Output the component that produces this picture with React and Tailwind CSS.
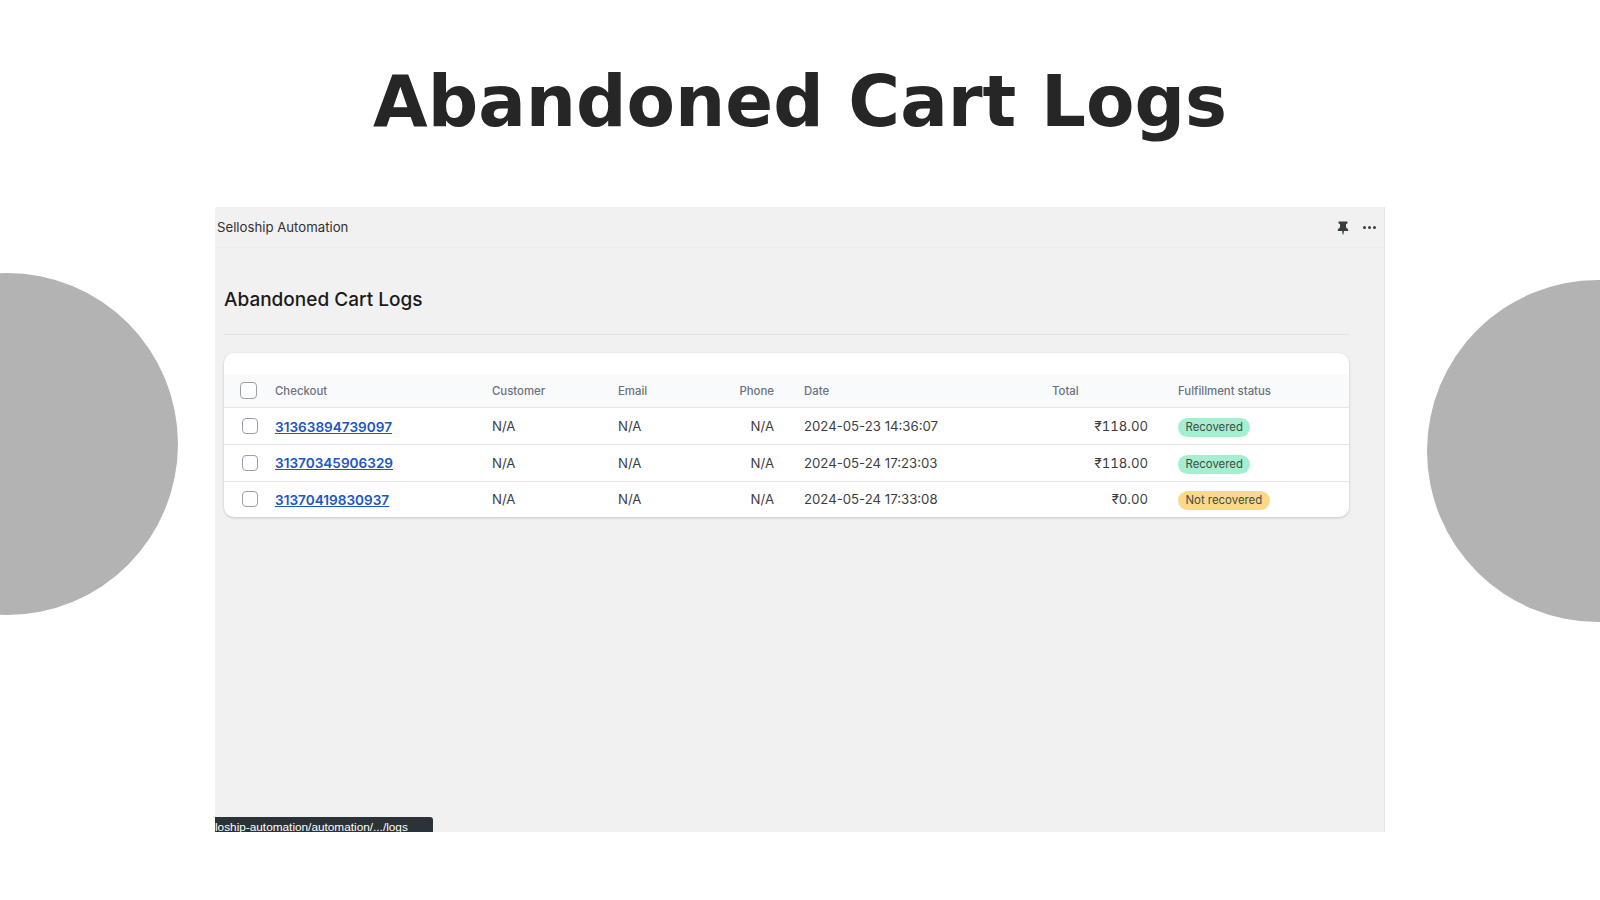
import React from 'react';

const rows = [
  { id: '31363894739097', date: '2024-05-23 14:36:07', total: '₹118.00', status: 'Recovered' },
  { id: '31370345906329', date: '2024-05-24 17:23:03', total: '₹118.00', status: 'Recovered' },
  { id: '31370419830937', date: '2024-05-24 17:33:08', total: '₹0.00', status: 'Not recovered' },
];

const gridCols = 'grid grid-cols-[51px_217px_126px_100px_56px_279px_95px_1fr] items-center';

const Checkbox = ({ className }) => (
  <span className={`block rounded-[4px] border-[1.5px] border-[#9aa0a8] bg-white ${className}`} />
);

const PinIcon = () => (
  <svg width="12" height="14" viewBox="0 0 12 14" fill="#3a3d40">
    <path d="M1.5 0.5h9v1.8L9 3.2v3L11.2 8.6v1.4H6.9L6.4 13.5h-.8L5.1 10H.8V8.6L3 6.2v-3L1.5 2.3z" />
  </svg>
);

const App = () => {
  return (
    <div className="relative w-[1600px] h-[900px] overflow-hidden bg-white font-['Inter',sans-serif]">
      {/* decorative circles */}
      <div className="absolute left-[-164px] top-[273px] w-[342px] h-[342px] rounded-full bg-[#b3b3b3]" />
      <div className="absolute left-[1427px] top-[280px] w-[342px] h-[342px] rounded-full bg-[#b3b3b3]" />

      <h1 className="h-[207px] pt-[54px] text-center text-[70.6px] leading-[96px] font-bold text-[#262626] font-['DejaVu_Sans',sans-serif]">
        Abandoned Cart Logs
      </h1>

      <div className="relative ml-[215px] w-[1170px] h-[625px] bg-[#f1f1f1] border-r border-[#e6e6e6] overflow-hidden">
        <div className="flex items-center justify-between h-[41px] pl-[2px] pr-[7px] pt-[1px] border-b border-[#ececec] bg-[#f1f1f1]">
          <span className="text-[13.2px] text-[#303030]">Selloship Automation</span>
          <div className="flex items-center gap-[14px]">
            <PinIcon />
            <span className="flex gap-[2px] w-[14px]">
              <i className="block w-[3px] h-[3px] rounded-full bg-[#3a3d40]" />
              <i className="block w-[3px] h-[3px] rounded-full bg-[#3a3d40]" />
              <i className="block w-[3px] h-[3px] rounded-full bg-[#3a3d40]" />
            </span>
          </div>
        </div>

        <div className="pl-[9px] w-[1134px]">
          <h2 className="pt-[38px] h-[87px] text-[19px] leading-[28px] font-medium text-[#1a1a1a] border-b border-[#e2e2e2]">
            Abandoned Cart Logs
          </h2>

          <div className="mt-[18px] pt-[21px] bg-white rounded-[10px] shadow-[0_1px_3px_rgba(0,0,0,0.18)] overflow-hidden">
            <div className={`${gridCols} h-[34px] bg-[#f9fafb] border-b border-[#e4e6ea] text-[11.4px] font-medium text-[#6b7280]`}>
              <div className="pl-4"><Checkbox className="w-[17px] h-[17px]" /></div>
              <div className="pt-[2px]">Checkout</div>
              <div className="pt-[2px]">Customer</div>
              <div className="pt-[2px]">Email</div>
              <div className="pt-[2px] text-right">Phone</div>
              <div className="pt-[2px] pl-[30px]">Date</div>
              <div className="pt-[2px] -ml-px">Total</div>
              <div className="pt-[2px] pl-[30px]">Fulfillment status</div>
            </div>
            {rows.map((r, i) => (
              <div key={r.id} className={`${gridCols} text-[13.2px] text-[#3d3d3d] ${i > 0 ? 'h-[36.5px] border-t border-[#e4e6ea]' : 'h-9'}`}>
                <div className="pl-[18px]"><Checkbox className="w-4 h-4" /></div>
                <div className="pt-[2px]"><a href="#" className="text-[13.6px] font-semibold text-[#1a56c4] underline">{r.id}</a></div>
                <div className="pt-[2px]">N/A</div>
                <div className="pt-[2px]">N/A</div>
                <div className="pt-[2px] text-right">N/A</div>
                <div className="pt-[2px] pl-[30px]">{r.date}</div>
                <div className="pt-[2px] text-right tabular-nums">{r.total}</div>
                <div className="flex pt-[3px] pl-[30px]">
                  <span className={`h-[19px] px-[7.5px] rounded-full text-[11.4px] leading-[19px] text-[#3f4a46] ${r.status === 'Recovered' ? 'bg-[#a4efd0]' : 'bg-[#fbd98a]'}`}>
                    {r.status}
                  </span>
                </div>
              </div>
            ))}
          </div>
        </div>

        <div className="absolute left-0 bottom-0 w-[218px] h-[15px] rounded-tr-[3px] bg-[#2b3338] overflow-hidden whitespace-nowrap text-[11.8px] leading-[20px] text-white font-['Liberation_Sans',sans-serif]">
          loship-automation/automation/.../logs
        </div>
      </div>
    </div>
  );
};

export default App;
